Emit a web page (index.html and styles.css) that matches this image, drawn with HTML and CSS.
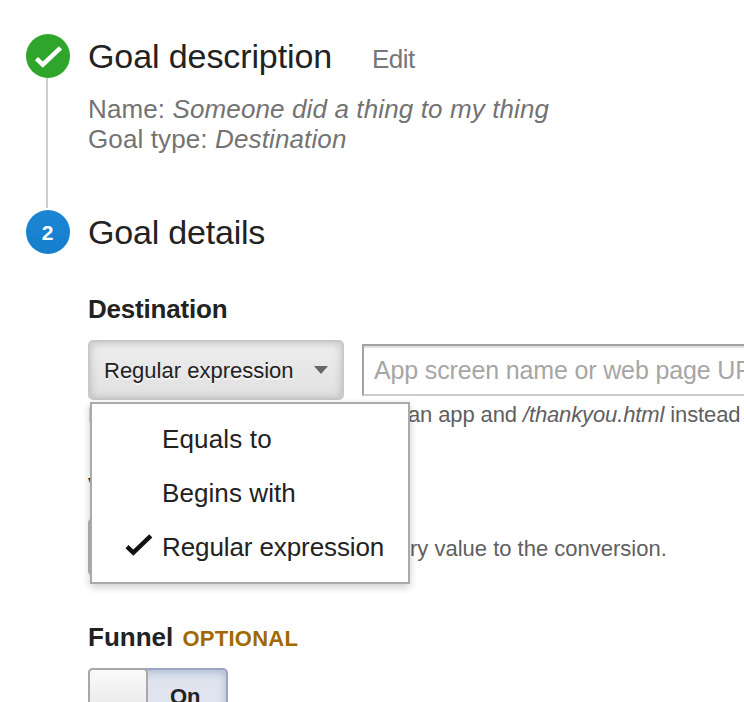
FILE: index.html
```html
<!DOCTYPE html>
<html lang="en">
<head>
<meta charset="utf-8">
<title>Goal setup</title>
<link rel="stylesheet" href="styles.css">
</head>
<body>
<main class="steps">
  <section class="step step-done">
    <div class="rail">
      <svg class="marker" viewBox="0 0 44 44"><circle cx="22" cy="22" r="22" fill="#2fa52b"/><path d="M10.5 24.6 L16.8 30.6 L34.5 13.8" fill="none" stroke="#fff" stroke-width="4.6"/></svg>
      <div class="line"></div>
    </div>
    <div class="body">
      <header class="head"><h2 class="title title-wide">Goal description</h2><a class="edit">Edit</a></header>
      <p class="summary">Name: <em>Someone did a thing to my thing</em><br>Goal type: <em>Destination</em></p>
    </div>
  </section>
  <section class="step">
    <div class="rail"><div class="marker number">2</div></div>
    <div class="body">
      <header class="head"><h2 class="title title-tight">Goal details</h2></header>
      <div class="field destination">
        <h3 class="label label-tight">Destination</h3>
        <div class="controls">
          <div class="select">
            <span class="selected">Regular expression</span>
            <svg class="caret" viewBox="0 0 14 8"><path d="M0 0H14L7 8Z" fill="#666"/></svg>
            <ul class="menu">
              <li class="item item-loose">Equals to</li>
              <li class="item">Begins with</li>
              <li class="item item-checked"><svg class="check" viewBox="0 0 28 24"><path d="M2 13.6 L8.3 19.6 L25.8 2.8" fill="none" stroke="#111" stroke-width="4.4"/></svg>Regular expression</li>
            </ul>
          </div>
          <div class="input">App screen name or web page URL</div>
        </div>
        <p class="help"><span class="lead">For example, use My Screen for</span><span class="help-text">an app and <em>/thankyou.html</em> instead</span></p>
      </div>
      <div class="field value">
        <h3 class="label">Value</h3>
        <div class="row"><div class="toggle-off"></div><span class="value-text">ry value to the conversion.</span></div>
      </div>
      <div class="field funnel">
        <h3 class="label">Funnel <small class="optional">OPTIONAL</small></h3>
        <div class="toggle"><span class="knob"></span><span class="on">On</span></div>
      </div>
    </div>
  </section>
</main>
</body>
</html>
```
FILE: styles.css
```css
* { box-sizing: border-box; }
html, body { margin: 0; height: 702px; overflow: hidden; background: #fff; }
body { font-family: "Liberation Sans", Arial, sans-serif; color: #222; }
h2, h3, p, ul { margin: 0; padding: 0; list-style: none; }
.steps { padding: 34px 0 0 26px; width: 744px; }
.step { display: flex; gap: 18px; }
.step-done { height: 176px; }
.rail { width: 44px; flex: none; display: flex; flex-direction: column; }
.marker { display: block; width: 44px; height: 44px; flex: none; }
.number { border-radius: 50%; background: linear-gradient(#1b86d4, #167fcd); color: #fff; font-weight: bold; font-size: 21px; line-height: 46px; text-align: center; padding-right: 1px; }
.line { flex: 1; width: 2px; margin: 0 0 2px 20px; background: #ccc; }
.body { flex: 1; min-width: 0; padding-top: 2px; white-space: nowrap; }
.head { display: flex; align-items: baseline; height: 40px; }
.title { font-size: 34px; line-height: 40px; font-weight: normal; }
.title-wide { width: 284px; letter-spacing: -.1px; }
.title-tight { letter-spacing: -.2px; }
.edit { font-size: 26px; line-height: 30px; color: #777; letter-spacing: -.5px; }
.summary { margin-top: 18px; font-size: 26px; line-height: 30px; color: #737373; letter-spacing: .12px; }
.label { font-size: 26px; line-height: 30px; height: 30px; }
.label-tight { letter-spacing: -.2px; }
.destination { margin-top: 42px; }
.controls { display: flex; gap: 18px; margin-top: 16px; height: 62px; }
.select { position: relative; width: 256px; height: 60px; flex: none; display: flex; align-items: center; justify-content: space-between; padding: 0 14px; border: 2px solid #c9c9c9; border-radius: 5px; background: linear-gradient(#eee, #e0e0e0); box-shadow: inset 0 1px 8px rgba(0,0,0,.2); font-size: 22px; text-shadow: 0 2px 0 rgba(255,255,255,.6); }
.selected { padding-top: 2px; }
.caret { width: 14px; height: 8px; }
.input { flex: 1; height: 52px; margin-top: 4px; overflow: hidden; padding-left: 10px; border: solid #a2a2a2; border-width: 2px 0 2px 2px; border-bottom-color: #ccc; box-shadow: inset 0 2px 0 #e0e0e0; font-size: 25px; line-height: 48px; letter-spacing: -.15px; color: #a6a6a6; }
.menu { position: absolute; z-index: 2; left: 0; top: 60px; width: 320px; height: 182px; padding: 8px 0; background: #fff; border: 2px solid #aaa; box-shadow: 0 3px 8px rgba(0,0,0,.2); text-shadow: none; }
.item { position: relative; height: 54px; padding-left: 70px; font-size: 26px; line-height: 54px; letter-spacing: .08px; }
.item-loose { letter-spacing: .15px; }
.item-checked { letter-spacing: -.1px; }
.check { position: absolute; left: 33px; top: 13px; width: 28px; height: 24px; }
.help { display: flex; height: 26px; font-size: 22px; line-height: 26px; color: #606060; letter-spacing: -.12px; }
.lead { flex: none; width: 320px; overflow: hidden; }
.value { margin-top: 44px; }
.row { display: flex; margin-top: 16px; height: 60px; }
.toggle-off { width: 140px; height: 58px; margin-right: 182px; border: 2px solid #b5b5b5; border-radius: 5px; background: #ddd; }
.value-text { font-size: 22px; line-height: 62px; color: #606060; }
.funnel { margin-top: 44px; }
.optional { margin-left: 2px; font-size: 22px; line-height: 1; letter-spacing: .25px; color: #a06a00; }
.toggle { display: flex; width: 140px; height: 60px; margin-top: 16px; border: 2px solid #9aa5c2; border-radius: 5px; background: #dfe4ee; box-shadow: inset 0 2px 8px rgba(90,110,160,.4); }
.knob { width: 60px; height: 60px; margin: -2px 0 0 -2px; border: 2px solid #a8a8a8; border-radius: 5px; background: linear-gradient(#fafafa, #e2e2e2); }
.on { flex: 1; padding-left: 22px; font-size: 22px; line-height: 54px; font-weight: bold; }
```
